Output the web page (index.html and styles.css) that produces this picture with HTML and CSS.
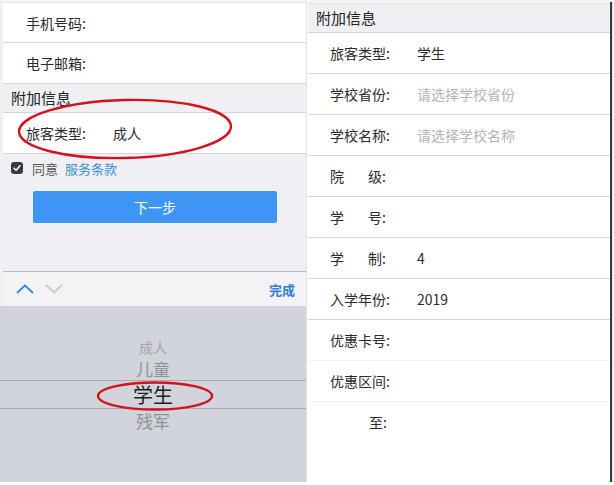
FILE: index.html
```html
<!DOCTYPE html>
<html lang="zh-CN">
<head>
    <meta charset="UTF-8">
    <title>旅客信息</title>
    <link rel="stylesheet" href="styles.css">
</head>
<body>
<div class="frame">
    <div class="panel left">
        <div class="cap"></div>
        <div class="row"><span class="name">手机号码:</span></div>
        <div class="row"><span class="name">电子邮箱:</span></div>
        <div class="head">附加信息</div>
        <div class="row"><span class="name">旅客类型:</span><span class="value">成人</span></div>
        <div class="gray">
            <div class="agree">
                <span class="check"><svg width="12" height="12" viewBox="0 0 12 12"><path d="M3 6.2 L5.1 8.3 L9 3.8" fill="none" stroke="#fff" stroke-width="1.6" stroke-linecap="round" stroke-linejoin="round"/></svg></span>
                <span class="agree-text">同意</span>
                <span class="terms">服务条款</span>
            </div>
            <div class="next">下一步</div>
        </div>
        <div class="toolbar">
            <svg class="arrow" width="18" height="10" viewBox="0 0 18 10"><path d="M1 9 L9 1.5 L17 9" fill="none" stroke="#3a84d4" stroke-width="1.8"/></svg>
            <svg class="arrow" width="18" height="10" viewBox="0 0 18 10"><path d="M1 1 L9 8.5 L17 1" fill="none" stroke="#c9c9ce" stroke-width="1.8"/></svg>
            <span class="done">完成</span>
        </div>
        <div class="picker">
            <div class="opt far">成人</div>
            <div class="opt near">儿童</div>
            <div class="opt selected">学生</div>
            <div class="opt near low">残军</div>
        </div>
        <svg class="mark mark-type" width="218" height="64" viewBox="0 0 218 64"><ellipse cx="109" cy="32" rx="106" ry="29" fill="none" stroke="#d3121c" stroke-width="2.4" transform="rotate(-1.5 109 32)"/></svg>
        <svg class="mark mark-pick" width="120" height="34" viewBox="0 0 120 34"><ellipse cx="60" cy="17" rx="57" ry="13.5" fill="none" stroke="#d3121c" stroke-width="2.4"/></svg>
    </div>
    <div class="panel right">
        <div class="cap"></div>
        <div class="head">附加信息</div>
        <div class="row"><span class="name">旅客类型:</span><span class="value">学生</span></div>
        <div class="row"><span class="name">学校省份:</span><span class="value hint">请选择学校省份</span></div>
        <div class="row"><span class="name">学校名称:</span><span class="value hint">请选择学校名称</span></div>
        <div class="row"><span class="name spread"><i>院</i><i>级:</i></span></div>
        <div class="row"><span class="name spread"><i>学</i><i>号:</i></span></div>
        <div class="row"><span class="name spread"><i>学</i><i>制:</i></span><span class="value">4</span></div>
        <div class="row"><span class="name">入学年份:</span><span class="value">2019</span></div>
        <div class="row soft"><span class="name">优惠卡号:</span></div>
        <div class="row soft"><span class="name">优惠区间:</span></div>
        <div class="row last"><span class="name end">至:</span></div>
    </div>
</div>
</body>
</html>
```

FILE: styles.css
```css
body {
    margin: 0;
    background: #fff;
    font-family: "Noto Sans CJK SC", "Noto Sans", sans-serif;
    color: #2b2b2b;
}

.frame {
    width: 610px;
    height: 482px;
    display: flex;
    background: #fff;
    box-shadow: 2px 2px 1px #3c3c3c;
    overflow: hidden;
}

.panel {
    display: flex;
    flex-direction: column;
    position: relative;
}

.left {
    width: 307px;
    padding-left: 3px;
    box-sizing: border-box;
    background: #efeff4;
    border-right: 1px solid #e2e2e6;
}

.right {
    flex: 1;
    margin-left: 1px;
    background: #fff;
}

.cap {
    height: 2px;
    background: #f4f4f4;
    border-bottom: 1px solid #e4e4e4;
}

.right .cap {
    height: 3px;
}

.row {
    height: 40px;
    display: flex;
    align-items: center;
    padding-left: 23px;
    background: #fff;
    border-bottom: 1px solid #d6d6da;
    font-size: 14px;
}

.left .row:nth-child(2) {
    height: 39px;
}

.right .row {
    padding-left: 22px;
}

.row.soft {
    border-bottom-color: #f1f1f3;
}

.row.last {
    border-bottom: 0;
}

.name {
    display: inline-block;
    width: 87px;
    flex: none;
}

.name.spread {
    display: inline-flex;
    justify-content: space-between;
    width: 56px;
    margin-right: 31px;
}

.name.spread i {
    font-style: normal;
}

.name.end {
    width: 57px;
    margin-right: 30px;
    text-align: right;
}

.value.hint {
    color: #b4b4b8;
}

.head {
    height: 28px;
    line-height: 28px;
    padding-left: 8px;
    background: #efeff4;
    border-bottom: 1px solid #d6d6da;
    font-size: 15px;
    color: #222;
}

.gray {
    height: 117px;
    padding-top: 1px;
    box-sizing: border-box;
}

.agree {
    display: flex;
    align-items: center;
    padding-left: 8px;
    height: 26px;
    font-size: 13px;
}

.check {
    width: 12px;
    height: 12px;
    border-radius: 3px;
    background: #3a3a3e;
    display: flex;
    margin-right: 9px;
}

.agree-text {
    color: #555;
    margin-right: 7px;
}

.terms {
    color: #3d8fd3;
}

.next {
    margin: 10px 0 0 30px;
    width: 244px;
    height: 32px;
    line-height: 32px;
    background: #3e96f4;
    border-radius: 2px;
    color: #fff;
    text-align: center;
    font-size: 14px;
}

.toolbar {
    height: 34px;
    display: flex;
    align-items: center;
    gap: 11px;
    padding: 0 11px 0 13px;
    background: #f3f3f6;
    border-top: 1px solid #b9b9be;
}

.done {
    margin-left: auto;
    color: #2f7fd2;
    font-size: 13px;
    font-weight: bold;
}

.picker {
    flex: 1;
    background: #d1d4db;
    padding-top: 30px;
    margin-left: -3px;
    text-align: center;
}

.opt {
    color: #909297;
}

.opt.far {
    font-size: 14px;
    line-height: 22px;
    color: #a3a5ab;
}

.opt.near {
    font-size: 17px;
    line-height: 22px;
}

.opt.low {
    line-height: 24px;
}

.opt.selected {
    height: 27px;
    line-height: 27px;
    font-size: 20px;
    color: #1e1e1e;
    border-top: 1px solid #a9acb4;
    border-bottom: 1px solid #a9acb4;
}

.mark {
    position: absolute;
}

.mark-type {
    left: 16px;
    top: 97px;
}

.mark-pick {
    left: 95px;
    top: 379px;
}
```
